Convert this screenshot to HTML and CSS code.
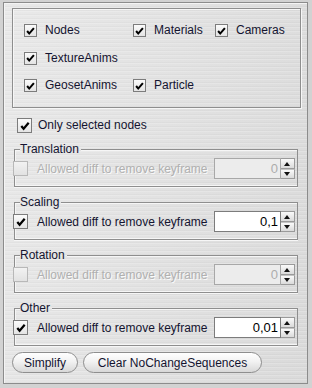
FILE: index.html
```html
<!DOCTYPE html>
<html>
<head>
<meta charset="utf-8">
<link rel="stylesheet" href="styles.css">
</head>
<body>
<div class="window">
  <div class="topbox">
    <label class="cb"><span class="box on small"><svg viewBox="0 0 13 13"><path d="M2.5 6.5 L5 9.5 L10.5 3"/></svg></span><span>Nodes</span></label>
    <label class="cb"><span class="box on small"><svg viewBox="0 0 13 13"><path d="M2.5 6.5 L5 9.5 L10.5 3"/></svg></span><span>Materials</span></label>
    <label class="cb"><span class="box on small"><svg viewBox="0 0 13 13"><path d="M2.5 6.5 L5 9.5 L10.5 3"/></svg></span><span>Cameras</span></label>
    <label class="cb span3"><span class="box on small"><svg viewBox="0 0 13 13"><path d="M2.5 6.5 L5 9.5 L10.5 3"/></svg></span><span>TextureAnims</span></label>
    <label class="cb"><span class="box on small"><svg viewBox="0 0 13 13"><path d="M2.5 6.5 L5 9.5 L10.5 3"/></svg></span><span>GeosetAnims</span></label>
    <label class="cb span2"><span class="box on small"><svg viewBox="0 0 13 13"><path d="M2.5 6.5 L5 9.5 L10.5 3"/></svg></span><span>Particle</span></label>
  </div>

  <label class="cb only"><span class="box on"><svg viewBox="0 0 13 13"><path d="M2.5 6.5 L5 9.5 L10.5 3"/></svg></span><span>Only selected nodes</span></label>

  <div class="group">
    <div class="ghead"><span class="corner"></span><span class="gtitle">Translation</span><span class="gline"></span></div>
    <div class="gbody">
      <div class="row disabled">
        <span class="box"></span>
        <span class="lbl">Allowed diff to remove keyframe</span>
        <span class="field">0</span>
        <span class="spin"><span class="up"></span><span class="down"></span></span>
      </div>
    </div>
  </div>

  <div class="group">
    <div class="ghead"><span class="corner"></span><span class="gtitle">Scaling</span><span class="gline"></span></div>
    <div class="gbody">
      <div class="row">
        <span class="box on"><svg viewBox="0 0 13 13"><path d="M2.5 6.5 L5 9.5 L10.5 3"/></svg></span>
        <span class="lbl">Allowed diff to remove keyframe</span>
        <span class="field">0,1</span>
        <span class="spin"><span class="up"></span><span class="down"></span></span>
      </div>
    </div>
  </div>

  <div class="group">
    <div class="ghead"><span class="corner"></span><span class="gtitle">Rotation</span><span class="gline"></span></div>
    <div class="gbody">
      <div class="row disabled">
        <span class="box"></span>
        <span class="lbl">Allowed diff to remove keyframe</span>
        <span class="field">0</span>
        <span class="spin"><span class="up"></span><span class="down"></span></span>
      </div>
    </div>
  </div>

  <div class="group">
    <div class="ghead"><span class="corner"></span><span class="gtitle">Other</span><span class="gline"></span></div>
    <div class="gbody">
      <div class="row">
        <span class="box on"><svg viewBox="0 0 13 13"><path d="M2.5 6.5 L5 9.5 L10.5 3"/></svg></span>
        <span class="lbl">Allowed diff to remove keyframe</span>
        <span class="field">0,01</span>
        <span class="spin"><span class="up"></span><span class="down"></span></span>
      </div>
    </div>
  </div>

  <div class="buttons">
    <button class="btn simplify">Simplify</button>
    <button class="btn clear">Clear NoChangeSequences</button>
  </div>
</div>
</body>
</html>
```

FILE: styles.css
```css
* { box-sizing: border-box; }
html, body { margin: 0; padding: 0; }
body {
  width: 312px;
  height: 388px;
  background: #d2d2d2;
  font-family: "Liberation Sans", Arial, sans-serif;
  font-size: 12px;
  color: #141430;
  overflow: hidden;
}
.window {
  margin: 2px 0 0 3px;
  width: 305px;
  height: 382px;
  border: 1px solid #8c8c8c;
  box-shadow: inset 1px 1px 0 #f4f4f4;
  background:
    repeating-linear-gradient(180deg, rgba(255,255,255,0.18) 0 1px, rgba(0,0,0,0) 1px 3px, rgba(0,0,0,0.025) 3px 4px),
    linear-gradient(100deg, #e9e9e9 0%, #e2e2e2 50%, #dadada 100%);
  padding: 5px 0 0 0;
  display: flex;
  flex-direction: column;
}
.topbox {
  margin-left: 8px;
  width: 289px;
  height: 100px;
  border: 1px solid #8e8e8e;
  box-shadow: inset 1px 1px 0 #f6f6f6, 1px 1px 0 #f6f6f6;
  padding: 15px 0 0 11px;
  display: grid;
  grid-template-columns: 109px 82px auto;
  grid-auto-rows: 13px;
  row-gap: 14.5px;
}
.span3 { grid-column: 1 / span 3; }
.span2 { grid-column: 2 / span 2; }
.cb {
  display: flex;
  align-items: center;
  gap: 8px;
  white-space: nowrap;
  line-height: 13px;
}
.box {
  flex: none;
  width: 15px;
  height: 15px;
  border: 1px solid #7c7c7c;
  background: linear-gradient(180deg, #fbfbfb, #e4e4e4);
  display: flex;
  align-items: center;
  justify-content: center;
}
.box.small { width: 13px; height: 13px; }
.box svg { width: 12px; height: 12px; }
.box svg path {
  fill: none;
  stroke: #000;
  stroke-width: 2.4;
  stroke-linecap: butt;
  stroke-linejoin: miter;
}
.only {
  margin: 10px 0 0 13px;
  height: 15px;
  gap: 6px;
}
.group {
  margin: 9px 0 0 10px;
  width: 284px;
}
.group + .group { margin-top: 8px; }
.ghead {
  display: flex;
  height: 14px;
  align-items: center;
}
.corner {
  align-self: flex-end;
  width: 6px;
  height: 7px;
  border-top: 1px solid #8e8e8e;
  border-left: 1px solid #8e8e8e;
  box-shadow: inset 1px 1px 0 #f6f6f6;
}
.gtitle {
  padding: 0 2px 0 0;
  line-height: 14px;
  color: #141430;
}
.gline {
  flex: 1;
  align-self: flex-end;
  height: 7px;
  border-top: 1px solid #8e8e8e;
  border-right: 1px solid #8e8e8e;
  box-shadow: inset 0 1px 0 #f6f6f6;
}
.gbody {
  height: 31px;
  border: 1px solid #8e8e8e;
  border-top: none;
  box-shadow: inset 1px -1px 0 #f6f6f6, 0 1px 0 #f6f6f6;
  padding: 2px 2px 0 0;
}
.row {
  display: flex;
  align-items: center;
  height: 21px;
  margin-left: -2px;
}
.lbl {
  flex: 1;
  margin-left: 9px;
  white-space: nowrap;
  color: #141430;
}
.field {
  width: 67px;
  height: 21px;
  border: 1px solid #7c7c7c;
  background: #fff;
  text-align: right;
  padding-right: 2px;
  font-size: 13px;
  line-height: 19px;
  color: #000;
}
.spin {
  width: 14px;
  height: 21px;
  display: flex;
  flex-direction: column;
}
.spin span {
  flex: 1;
  border: 1px solid #9a9a9a;
  border-left: none;
  background: linear-gradient(180deg, #fafafa, #dadada);
  position: relative;
}
.spin .down { border-top: 1px solid #c4c4c4; }
.spin span::after {
  content: "";
  position: absolute;
  left: 3px;
  top: 3px;
  border-left: 3.5px solid transparent;
  border-right: 3.5px solid transparent;
}
.spin .up::after { border-bottom: 4px solid #111; }
.spin .down::after { border-top: 4px solid #111; top: 2px; }

.disabled .box {
  border-color: #b8b8b8;
  background: linear-gradient(180deg, #f2f2f2, #e2e2e2);
}
.disabled .lbl {
  color: #b0b0b0;
  text-shadow: 1px 1px 0 #fafafa;
}
.disabled .field {
  background: #ececec;
  border-color: #a8a8a8;
  color: #acacac;
}

.buttons {
  display: flex;
  gap: 5px;
  margin: 6px 0 0 8px;
}
.btn {
  height: 21px;
  border: 1px solid #8e8e8e;
  border-radius: 11px;
  background: linear-gradient(180deg, #ffffff 0%, #f2f2f2 45%, #d8d8d8 100%);
  font-family: "Liberation Sans", Arial, sans-serif;
  font-size: 12px;
  color: #141430;
  padding: 0;
  margin: 0;
}
.simplify { width: 66px; }
.clear { width: 179px; }
```
